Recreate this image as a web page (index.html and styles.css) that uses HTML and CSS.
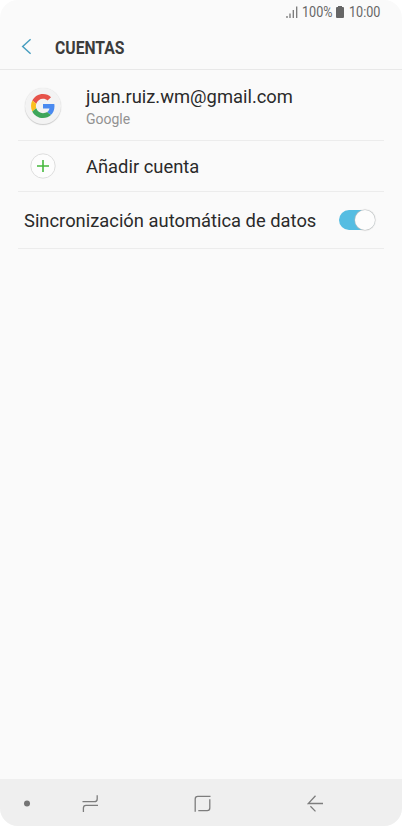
FILE: index.html
```html
<!DOCTYPE html>
<html lang="es">
<head>
<meta charset="utf-8">
<title>Cuentas</title>
<link rel="stylesheet" href="styles.css">
</head>
<body>
<div class="screen">
  <div class="status">
    <svg class="signal" width="12" height="12" viewBox="0 0 12 12"><path d="M1 10v2M4 7.5V12M7.3 4V12M10.7 .5V12"/></svg>
    <span class="battery-text">100%</span>
    <svg class="battery" width="8" height="12" viewBox="0 0 8 12"><path d="M2 0h4v1h1q1 0 1 1v9q0 1-1 1H1q-1 0-1-1V2q0-1 1-1h1z"/></svg>
    <span class="clock">10:00</span>
  </div>
  <header class="header">
    <svg class="back" width="11" height="17" viewBox="0 0 11 17"><path d="M9.600 1.300 1.700 8.500l7.900 7.200"/></svg>
    <h1 class="title">CUENTAS</h1>
  </header>
  <main class="list">
    <div class="row account">
      <div class="avatar">
        <svg width="24" height="24" viewBox="0 0 48 48">
          <path fill="#e6534a" d="M24 9.5c3.54 0 6.71 1.22 9.21 3.6l6.85-6.85C35.9 2.38 30.47 0 24 0 14.62 0 6.51 5.38 2.56 13.22l7.98 6.19C12.43 13.72 17.74 9.5 24 9.5z"/>
          <path fill="#4a8af0" d="M46.98 24.55c0-1.57-.15-3.09-.38-4.55H24v9.02h12.94c-.58 2.96-2.26 5.48-4.78 7.18l7.73 6c4.51-4.18 7.09-10.36 7.09-17.65z"/>
          <path fill="#fbc01e" d="M10.53 28.59c-.48-1.45-.76-2.99-.76-4.59s.27-3.14.76-4.59l-7.98-6.19C.92 16.46 0 20.12 0 24s.92 7.54 2.56 10.78l7.97-6.19z"/>
          <path fill="#3ea65a" d="M24 48c6.48 0 11.93-2.13 15.89-5.81l-7.73-6c-2.15 1.45-4.92 2.3-8.16 2.3-6.26 0-11.57-4.22-13.47-9.91l-7.98 6.19C6.51 42.62 14.62 48 24 48z"/>
        </svg>
      </div>
      <div class="texts">
        <span class="label email">juan.ruiz.wm@gmail.com</span>
        <span class="sub">Google</span>
      </div>
    </div>
    <div class="row add">
      <svg class="plus" width="26" height="26" viewBox="0 0 26 26"><circle cx="13" cy="13" r="12.2"/><path d="M13 7v12M7 13h12"/></svg>
      <span class="label">Añadir cuenta</span>
    </div>
    <div class="row sync">
      <span class="label">Sincronización automática de datos</span>
      <div class="switch"><div class="knob"></div></div>
    </div>
  </main>
  <nav class="nav">
    <svg width="402" height="47" viewBox="0 0 402 47">
      <circle cx="27" cy="24.5" r="3"/>
      <path d="M82.5 22.7h12q2.7 0 2.7-2.7v-3.8M98 26.4H86q-2.6 0-2.6 2.700v3.800"/>
      <path d="M210.500 17.400h-12.700q-2.600 0-2.600 2.600v12.800M198.300 31.700h8.900q2.600 0 2.600-2.600v-8.800"/>
      <path d="M323 24.500h-14.700l7.200-7.700M310.400 27.200l5.100 5.200"/>
    </svg>
  </nav>
</div>
</body>
</html>
```
FILE: styles.css
```css
body {
  margin: 0;
  background: #fff;
  font-family: Roboto, sans-serif;
  color: #2a2a2a;
}
.screen {
  display: flex;
  flex-direction: column;
  width: 402px;
  height: 826px;
  background: #fafafa;
  border-radius: 18px;
  overflow: hidden;
}
.status {
  display: flex;
  align-items: center;
  height: 24px;
  padding: 0 0 1px 286px;
  box-sizing: border-box;
  font-size: 14px;
  color: #666;
}
.signal {
  fill: none;
  stroke: #777;
  stroke-width: 1.3;
}
.battery-text, .clock {
  transform-origin: 0 50%;
  transform: scaleX(.9);
  white-space: nowrap;
}
.battery-text {
  width: 30px;
  margin: 0 4px;
}
.battery {
  fill: #666;
  margin-right: 5px;
}
.header {
  display: flex;
  align-items: center;
  height: 45px;
  padding-left: 21px;
  border-bottom: 1px solid #e8e8e8;
}
.back {
  fill: none;
  stroke: #4a9fc0;
  stroke-width: 1.5;
}
.title {
  margin: 2px 0 0 23px;
  font-size: 18.500px;
  font-weight: 700;
  line-height: 22px;
  color: #3c3c3c;
  transform-origin: 0 50%;
  transform: scaleX(.85);
}
.list {
  flex: 1;
  padding: 0 18px;
}
.row {
  display: flex;
  align-items: center;
  box-sizing: border-box;
  border-bottom: 1px solid #ececec;
}
.account { height: 71px; }
.add { height: 51px; padding-left: 12px; }
.sync { height: 57px; padding: 0 9px 0 6px; justify-content: space-between; }
.avatar {
  display: flex;
  align-items: center;
  justify-content: center;
  width: 36px;
  height: 36px;
  margin: 2px 0 0 7px;
  border-radius: 50%;
  background: #f3f3f3;
  box-shadow: 0 1px 1px #ccc, 0 0 1px #ddd;
}
.texts {
  display: flex;
  flex-direction: column;
  margin: 4px 0 0 25px;
}
.label {
  font-size: 19px;
  line-height: 24px;
  white-space: nowrap;
  transform-origin: 0 50%;
  transform: scaleX(.966);
}
.add .label, .sync .label {
  margin-top: 2px;
}
.sub {
  font-size: 14px;
  line-height: 20px;
  color: #929292;
}
.plus {
  fill: #fdfdfd;
  stroke: #ddd;
  margin-right: 30px;
}
.plus path {
  stroke: #45b83c;
  stroke-width: 1.6;
}
.switch {
  display: flex;
  flex: none;
  justify-content: flex-end;
  align-items: center;
  width: 36px;
  height: 20px;
  margin-left: -12px;
  border-radius: 10px;
  background: #55bde2;
}
.knob {
  width: 20px;
  height: 20px;
  border-radius: 50%;
  background: #fdfdfd;
  box-shadow: 0 0 1px .5px #bbb;
}
.nav {
  height: 47px;
  background: #efefef;
}
.nav svg {
  display: block;
  fill: none;
  stroke: #7d7d7d;
  stroke-width: 1.3;
}
.nav circle {
  fill: #757575;
  stroke: none;
}
```
